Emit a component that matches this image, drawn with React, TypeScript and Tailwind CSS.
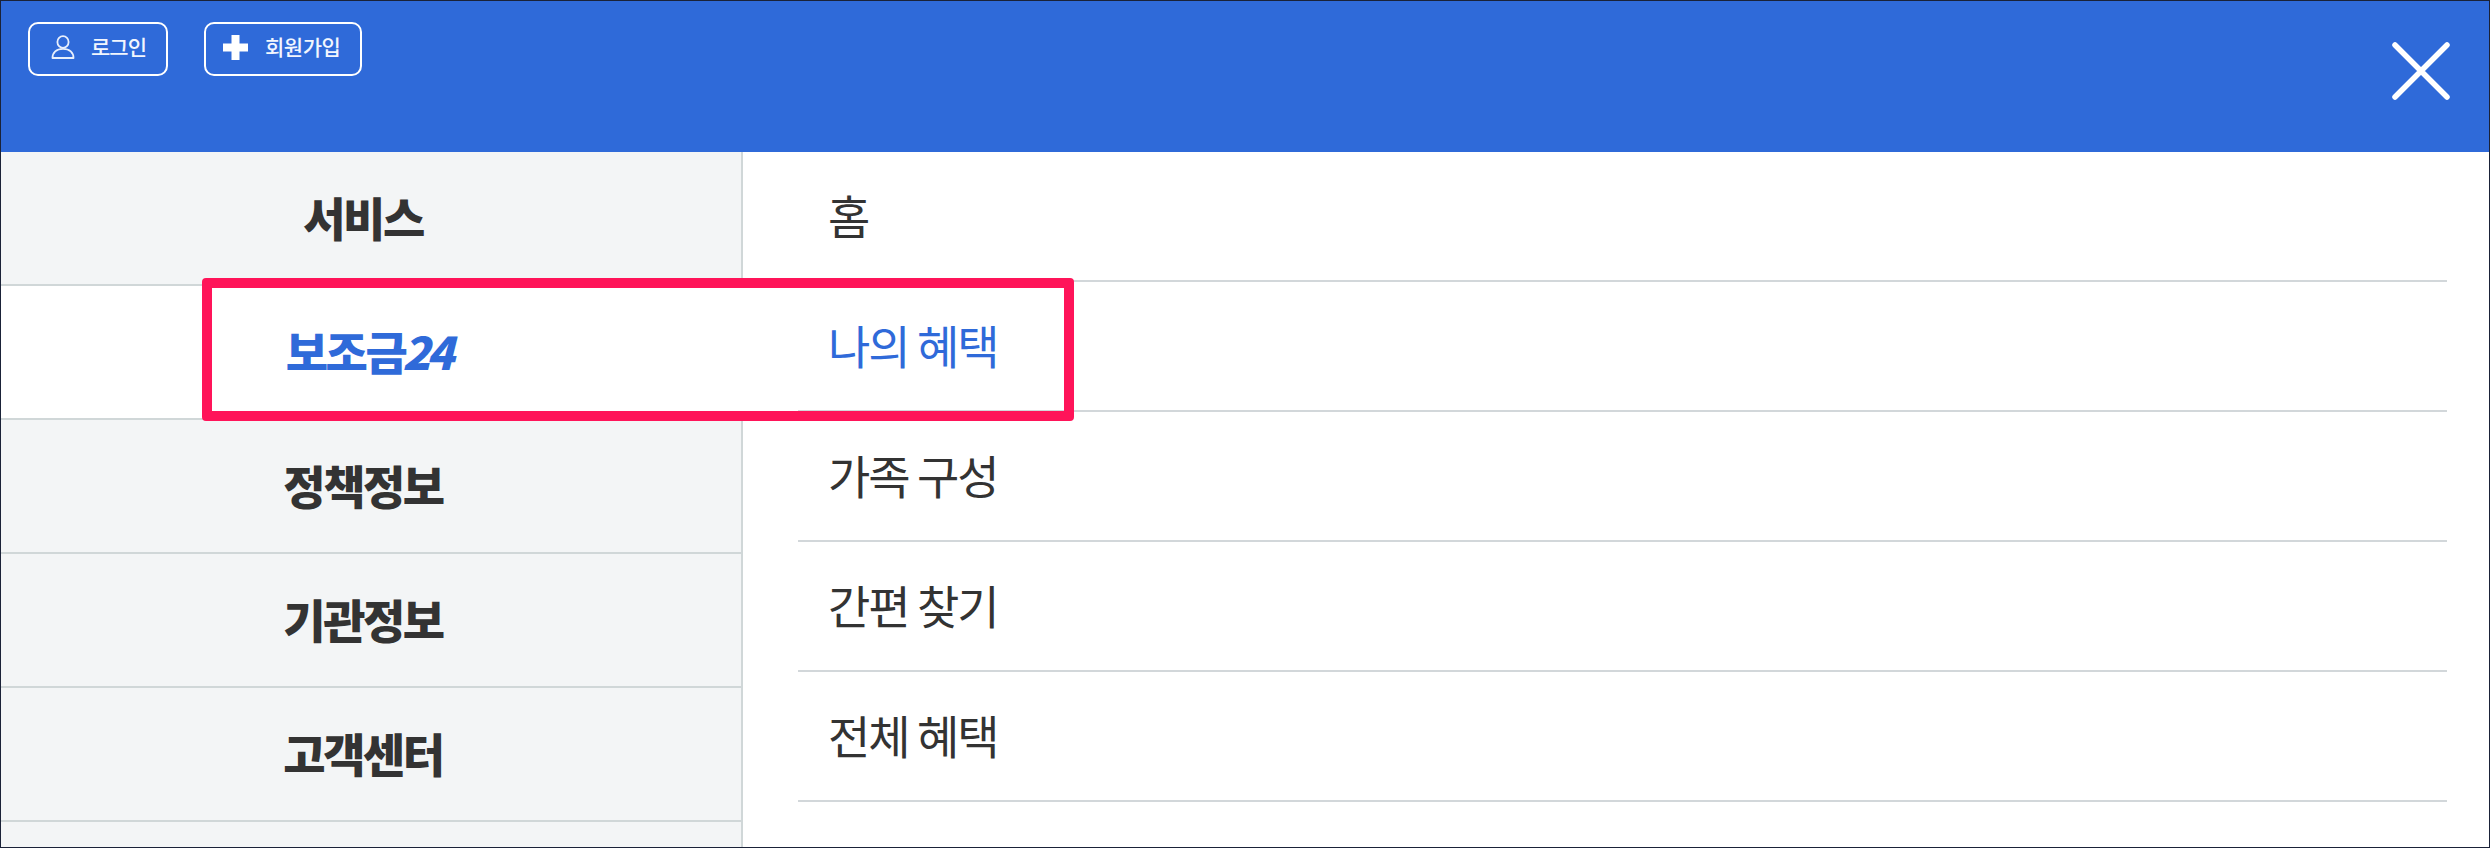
import React from 'react';

const FONT = 'font-["Noto_Sans_CJK_KR","Noto_Sans",sans-serif]';

const sideMenu = [
  { label: '서비스' },
  { label: '보조금', suffix: '24', active: true },
  { label: '정책정보' },
  { label: '기관정보' },
  { label: '고객센터' },
];

const subMenu = [
  { label: '홈' },
  { label: '나의 혜택', active: true },
  { label: '가족 구성' },
  { label: '간편 찾기' },
  { label: '전체 혜택' },
];

function UserIcon() {
  return (
    <svg className="w-[24px] h-[24px] shrink-0" viewBox="0 0 24 24" fill="none" stroke="#e8effc" strokeWidth={1.8}>
      <ellipse cx="12" cy="7" rx="5.6" ry="5.8" />
      <path d="M1.500 23c0-5.200 3.800-9.200 10.500-9.200S22.500 17.800 22.500 23z" strokeLinejoin="round" />
    </svg>
  );
}

function PlusIcon() {
  return (
    <svg className="w-[25px] h-[25px] shrink-0" viewBox="0 0 25 25" fill="#fff">
      <path d="M8.500 0h8v8.500h8.500v8h-8.500v8.500h-8v-8.500h-8.500v-8h8.500z" />
    </svg>
  );
}

export default function App() {
  return (
    <div className={`relative w-[2490px] h-[848px] box-border border border-[#1a2238] overflow-hidden bg-white ${FONT}`}>
      {/* top bar */}
      <header className="h-[151px] bg-[#2f6ad9] flex items-start justify-between pt-[21px] pl-[27px] pr-[39px]">
        <div className="flex gap-[36px]">
          <button className="w-[140px] h-[54px] border-2 border-white rounded-[10px] flex items-center pl-[21px] pb-[4px] gap-[16px] text-[#f2f6fe] text-[21px] font-medium tracking-[-1px]">
            <UserIcon />
            <span>로그인</span>
          </button>
          <button className="w-[158px] h-[54px] border-2 border-white rounded-[10px] flex items-center pl-[17px] pb-[4px] gap-[17px] text-[#f2f6fe] text-[21px] font-medium tracking-[-0.500px]">
            <PlusIcon />
            <span>회원가입</span>
          </button>
        </div>
        <svg className="w-[60px] h-[60px] mt-[19px] mr-[-1px]" viewBox="0 0 60 60" stroke="#fff" strokeWidth={5.500} strokeLinecap="round">
          <path d="M4 4l52 52M56 4L4 56" />
        </svg>
      </header>

      <div className="flex h-[696px]">
        {/* left menu */}
        <nav className="w-[742px] shrink-0 bg-[#f3f5f6] border-r-2 border-[#d0d7d8]">
          {sideMenu.map((item) => (
            <div
              key={item.label}
              className={
                item.active
                  ? 'h-[134px] w-[742px] -mr-[2px] relative bg-white border-b-2 border-[#d0d7d8] flex items-center justify-center pr-[8px] pb-[3px] text-[46px] font-black tracking-[-2.500px] text-[#2f6ad9]'
                  : 'h-[134px] border-b-2 border-[#d0d7d8] flex items-center justify-center pr-[16px] pb-[3px] text-[46px] font-black tracking-[-2.500px] text-[#333333]'
              }
            >
              {item.label}
              {item.suffix && <span className="italic -ml-[3px] tracking-[-4px]">{item.suffix}</span>}
            </div>
          ))}
        </nav>

        {/* right menu */}
        <ul className="flex-1 pl-[55px] pr-[42px]">
          {subMenu.map((item) => (
            <li
              key={item.label}
              className={`h-[130px] border-b-2 border-[#d2d7da] flex items-center pl-[30px] pb-[4px] text-[46px] tracking-[-2px] ${
                item.active ? 'text-[#2f6ad9]' : 'text-[#333333]'
              }`}
            >
              {item.label}
            </li>
          ))}
        </ul>
      </div>

      {/* annotation box */}
      <div className="absolute left-[201px] top-[277px] w-[872px] h-[143px] border-[10px] border-[#ff1459] rounded-[4px]" />
    </div>
  );
}
